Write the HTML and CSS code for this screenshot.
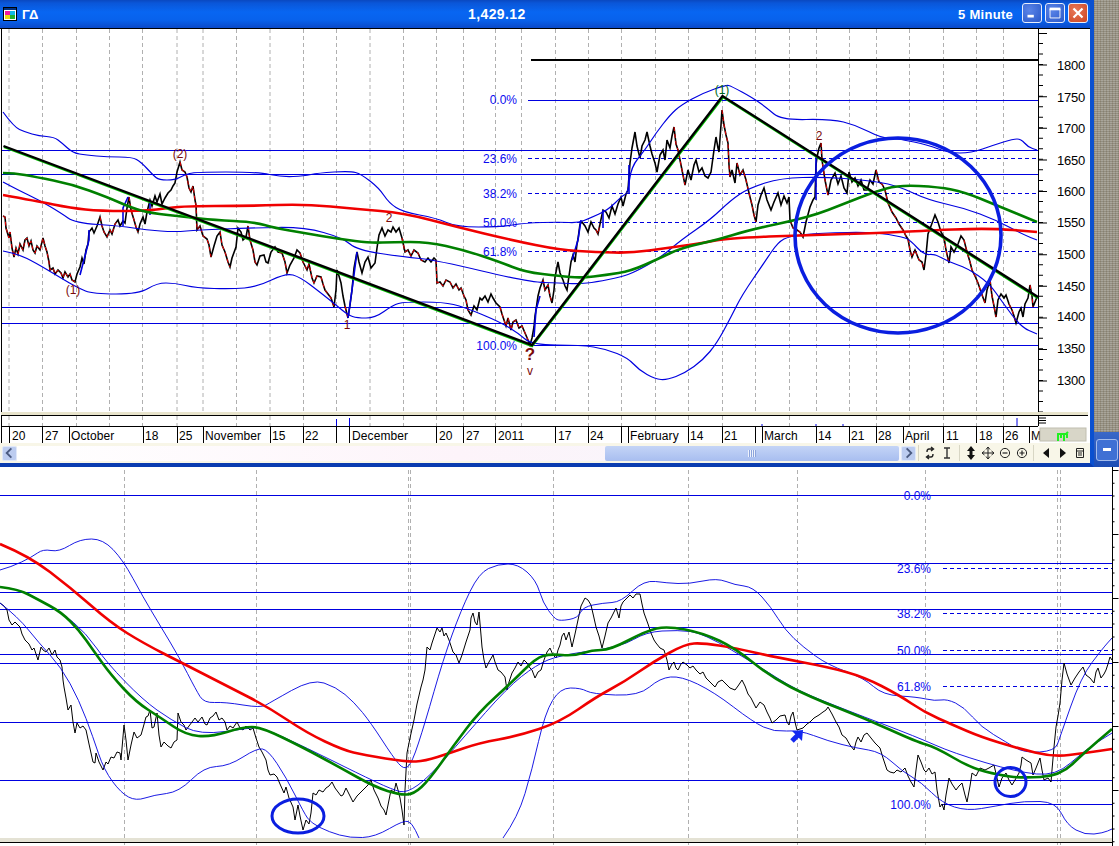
FILE: index.html
```html
<!DOCTYPE html>
<html lang="en">
<head>
	<meta charset="UTF-8">
	<title>ΓΔ 5 Minute</title>
	<link rel="stylesheet" href="styles.css">
	<script src="app.js"></script>
</head>
<body>
<div class="desktop">
	<div class="top">
		<div class="window">
			<div class="titlebar">
				<svg class="app-icon" viewBox="0 0 14 14" width="14" height="14">
					<rect x="0.5" y="0.5" width="13" height="13" fill="#fff" stroke="#000"/>
					<rect x="1" y="1" width="12" height="2" fill="#003080"/>
					<rect x="2" y="4" width="5" height="4" fill="#f018a0"/>
					<rect x="7" y="4" width="5" height="4" fill="#10b8e8"/>
					<rect x="2" y="8" width="5" height="4" fill="#e8d810"/>
					<rect x="7" y="8" width="5" height="4" fill="#20b030"/>
				</svg>
				<span class="title-name">ΓΔ</span>
				<span class="title-price">1,429.12</span>
				<span class="title-period">5 Minute</span>
				<div class="win-btns">
					<span class="win-btn"><svg viewBox="0 0 20 20" width="18" height="18"><rect x="5" y="12" width="7" height="3" fill="#fff"/></svg></span>
					<span class="win-btn"><svg viewBox="0 0 20 20" width="18" height="18"><path d="M4.5 5.5h11v10h-11z" fill="none" stroke="#fff"/><rect x="4" y="4" width="12" height="3" fill="#fff"/></svg></span>
					<span class="win-btn win-close"><svg viewBox="0 0 20 20" width="18" height="18"><path d="M5 5l10 10M15 5L5 15" stroke="#fff" stroke-width="2.4" fill="none"/></svg></span>
				</div>
			</div>

			<svg class="chart-top" viewBox="0 28 1090 415" width="1090" height="415">
				<rect class="paper" x="0" y="28" width="1090" height="415"/>
				<!-- time grid -->
				<path class="grid" d="M9 29V412M42.5 29V412M76.5 29V412M109.5 29V412M142.5 29V412M177 29V412M203 29V412M236.5 29V412M270 29V412M303.5 29V412M336.5 29V412M370 29V412M403.5 29V412M436.5 29V412M463.5 29V412M495.5 29V412M521.5 29V412M555.5 29V412M588.5 29V412M621.5 29V412M655.5 29V412M688.5 29V412M722.5 29V412M755.5 29V412M789.5 29V412M816.5 29V412M849.5 29V412M876.5 29V412M909.5 29V412M943.5 29V412M976.5 29V412M1003.5 29V412"/>
				<path class="grid" d="M9 416V426M42.5 416V426M76.5 416V426M109.5 416V426M142.5 416V426M177 416V426M236.5 416V426M270 416V426M303.5 416V426M370 416V426M403.5 416V426M436.5 416V426M463.5 416V426M495.5 416V426M521.5 416V426M588.5 416V426M621.5 416V426M655.5 416V426M688.5 416V426M722.5 416V426M789.5 416V426M876.5 416V426M909.5 416V426M943.5 416V426M976.5 416V426M1003.5 416V426"/>

				<!-- fib levels -->
				<path class="level" d="M2 150.5H1038M2 174.5H1038M2 307.5H1038M2 323.5H1038M528 100.5H1038M530 345.5H1038"/>
				<path class="level-dash" d="M528 158.5H1038M528 193.5H1038M528 222.5H1038M528 251.5H1038"/>
				<path class="heavy" d="M531 60H1038"/>

				<text class="fib" x="517" y="104" text-anchor="end">0.0%</text>
				<text class="fib" x="517" y="163" text-anchor="end">23.6%</text>
				<text class="fib" x="517" y="198" text-anchor="end">38.2%</text>
				<text class="fib" x="517" y="227" text-anchor="end">50.0%</text>
				<text class="fib" x="517" y="256" text-anchor="end">61.8%</text>
				<text class="fib" x="517" y="350" text-anchor="end">100.0%</text>

				<!-- price -->
				<polyline class="price" points="3,216 5,217 6,228 9,238 10,232 12,248 14,257 16,248 18,254 20,244 23,250 25,240 27,238 29,246 31,241 33,250 35,253 37,246 40,250 43,238 45,246 47,252 49,262 50,270 53,268 55,274 58,270 61,273 63,278 65,272 68,277 70,274 72,280 75,282 77,274 80,267 82,258 84,264 86,250 88,244 89,232 92,228 94,233 97,226 100,217 102,226 104,232 107,237 110,230 112,234 115,224 118,220 120,226 123,221 125,223 127,208 129,197 131,210 134,220 136,227 138,232 140,224 143,217 145,224 147,212 150,200 152,206 155,196 157,202 160,194 162,204 165,198 168,193 171,190 173,186 175,183 177,172 180,162 182,170 185,172 187,177 189,188 191,192 193,186 195,200 196,205 197,230 200,226 203,236 207,239 209,245 211,257 214,246 217,236 220,232 222,245 225,252 228,262 230,267 232,258 236,247 238,228 241,232 243,240 246,237 248,226 250,240 253,250 255,262 257,265 260,256 264,255 266,262 268,263 271,252 275,247 278,252 282,253 285,262 287,273 290,265 294,258 297,250 300,253 303,262 307,270 309,264 312,278 314,283 317,276 321,277 323,284 325,290 328,294 331,298 334,307 336,290 337,270 339,276 341,283 343,296 345,306 348,318 350,305 352,290 354,268 357,252 359,262 362,273 365,262 368,257 371,268 375,263 377,248 379,235 382,228 385,236 388,230 391,232 393,227 396,232 399,228 402,238 405,252 408,250 411,256 414,250 418,253 421,260 425,262 428,258 431,262 434,258 436,260 437,283 440,282 443,286 446,280 450,282 453,288 456,284 459,290 461,288 464,296 466,300 468,310 471,315 474,306 477,310 480,298 482,300 485,296 488,302 491,294 493,298 496,303 500,307 502,314 504,320 506,326 508,318 511,330 513,322 516,320 519,328 522,326 525,333 528,340 530,345 532,338 534,327 535,316 536,310 538,296 540,288 543,280 545,290 548,285 550,296 552,303 554,290 555,277 558,262 560,273 563,280 565,286 567,290 569,276 571,262 573,255 575,262 577,244 578,239 580,224 582,222 585,226 588,232 591,222 594,228 596,230 598,234 600,224 603,210 606,212 609,218 612,206 615,214 618,204 621,197 623,206 626,194 628,190 630,163 632,148 635,132 637,146 640,158 642,146 645,140 647,132 650,146 652,154 655,163 657,172 660,155 663,150 665,160 667,140 670,148 672,136 674,127 676,144 678,150 680,160 683,175 685,185 688,170 691,180 694,165 696,160 699,172 702,168 705,176 708,178 711,172 714,150 716,137 718,148 719,152 721,125 722,110 724,125 726,135 728,143 729,165 730,177 732,170 735,183 737,163 740,175 743,170 746,180 749,193 752,205 754,215 756,222 758,205 761,195 764,188 767,200 771,210 774,202 778,193 781,205 784,196 787,203 789,197 790,220 793,228 797,230 800,232 803,237 806,222 810,207 813,200 815,197 816,165 817,157 819,148 821,143 822,160 825,180 828,195 831,180 835,173 838,184 841,176 844,188 847,193 849,172 852,182 855,178 858,186 861,180 864,190 867,190 870,180 873,184 876,170 879,182 882,184 885,190 888,203 892,212 896,218 899,224 903,230 906,236 908,239 910,250 912,257 915,250 919,260 922,262 924,270 926,255 928,234 931,226 935,215 938,222 941,232 944,237 946,250 949,263 951,247 954,252 958,244 961,236 964,240 967,252 970,262 972,270 975,276 978,283 981,292 985,303 987,290 990,280 992,296 994,306 996,317 998,300 1001,294 1004,298 1006,295 1009,304 1012,310 1014,316 1016,323 1019,312 1021,308 1023,317 1025,304 1028,298 1030,285 1032,296 1033,307 1035,302 1037,297"/>
				<path class="price-down" d="M3 216L5 217L6 228L9 238L10 232L12 248L14 257L16 248L18 254L20 244L23 250L25 240L27 238L29 246L31 241L33 250L35 253L37 246L40 250L43 238L45 246L47 252L49 262L50 270L53 268L55 274L58 270L61 273L63 278L65 272L68 277L70 274L72 280L75 282M100 217L102 226L104 232L107 237L110 230L112 234L115 224L118 220M129 197L131 210L134 220L136 227L138 232M180 162L182 170L185 172L187 177L189 188L191 192L193 186L195 200L196 205L197 230L200 226L203 236L207 239L209 245L211 257M220 232L222 245L225 252L228 262L230 267M248 226L250 240L253 250L255 262L257 265M275 247L278 252L282 253L285 262L287 273M300 253L303 262L307 270L309 264L312 278L314 283L317 276L321 277L323 284L325 290L328 294L331 298L334 307M345 306L348 318M402 238L405 252L408 250L411 256L414 250L418 253L421 260L425 262M436 260L437 283L440 282L443 286L446 280L450 282L453 288L456 284L459 290L461 288L464 296L466 300L468 310L471 315M500 307L502 314L504 320L506 326L508 318L511 330L513 322L516 320L519 328L522 326L525 333L528 340L530 345M543 280L545 290L548 285L550 296L552 303M596 230L598 234L600 224M674 127L676 144L678 150L680 160L683 175L685 185M722 110L724 125L726 135L728 143L729 165L730 177M737 163L740 175L743 170L746 180L749 193L752 205L754 215L756 222M790 220L793 228L797 230L800 232L803 237M821 143L822 160L825 180L828 195M876 170L879 182L882 184L885 190L888 203L892 212L896 218L899 224L903 230L906 236L908 239L910 250L912 257L915 250L919 260L922 262L924 270M944 237L946 250L949 263M964 240L967 252L970 262L972 270L975 276L978 283L981 292L985 303M990 280L992 296L994 306L996 317M1009 304L1012 310L1014 316L1016 323M1030 285L1032 296L1033 307"/>

				<!-- bollinger bands -->
				<polyline class="band smooth" points="3,112 14,127 25,132 39,136 54,137 62,143 73,153 86,155 107,157 132,157 141,162 153,175 159,180 175,180 184,175 195,172 257,172 282,177 304,176 318,173 350,171 361,174 379,188 389,203 403,212 436,218 457,227 500,227 525,223 560,222 578,223 590,218 608,210 622,196 628,193 631,167 645,150 656,133 670,115 681,105 703,93 726,85 731,86 753,98 767,108 781,120 831,119 856,125 881,138 900,139 928,145 949,153 971,153 994,145 1013,139 1021,139 1028,147 1037,150"/>
				<polyline class="band smooth" points="3,182 18,190 39,200 61,213 75,223 121,226 146,230 175,232 198,230 250,228 304,227 343,238 357,250 404,257 436,260 528,282 560,283 578,284 596,282 621,277 635,272 660,258 681,240 710,220 731,200 749,188 781,178 824,177 864,180 896,185 928,200 964,208 996,220 1024,235 1037,240"/>
				<polyline class="band smooth" points="3,251 18,254 36,263 61,278 78,288 93,294 139,294 157,283 175,283 196,288 232,289 257,287 286,273 300,277 321,293 336,305 348,315 357,318 375,318 393,305 404,302 443,302 464,307 500,322 518,333 532,345 581,345 606,349 628,358 639,370 655,379 667,380 685,373 703,360 717,343 731,317 742,295 764,263 778,242 790,236 821,233 874,232 903,237 910,240 924,255 935,254 949,262 967,268 989,283 1003,303 1021,327 1037,334"/>
				<path class="band-spike" d="M80 275L86 252L89 240V230M123 226V208L128 197M150 215V200M348 318L352 290L357 252M534 337L536 310L540 296M572 260L578 240L581 220M603 228V210M629 193V165M816 200V157"/>

				<!-- moving averages -->
				<polyline class="ma-red smooth" points="3,195 36,201 71,208 100,211 150,211 179,206 250,206 304,204 357,209 404,213 457,227 511,240 560,250 596,252 631,253 667,248 703,243 728,238 810,235 881,233 917,231 989,228 1037,232"/>
				<polyline class="ma-green smooth" points="3,173 14,173 36,177 71,184 107,197 132,208 150,213 186,217 214,220 254,222 275,228 304,233 339,239 371,243 393,242 428,242 464,250 500,262 525,272 560,276 581,278 606,275 631,271 660,258 681,248 717,240 749,230 810,217 846,203 874,192 899,185 939,187 964,192 996,205 1037,222"/>

				<!-- trend lines -->
				<path class="trend-edge" d="M4 147L532 346L723 97L1038 298"/>
				<path class="trend" d="M3.5 146L532 345L722.5 96L1038 297"/>

				<ellipse class="ring-big" cx="898" cy="235.5" rx="103" ry="97.5"/>

				<text class="wave" x="180" y="158" text-anchor="middle">(2)</text>
				<text class="wave" x="73" y="294" text-anchor="middle">(1)</text>
				<text class="wave wave-green" x="722" y="94" text-anchor="middle">(1)</text>
				<text class="wave" x="819" y="140" text-anchor="middle">2</text>
				<text class="wave" x="389" y="222" text-anchor="middle">2</text>
				<text class="wave" x="347" y="329" text-anchor="middle">1</text>
				<text class="wave-mark" x="530" y="360" text-anchor="middle">?</text>
				<text class="wave" x="530" y="375" text-anchor="middle">v</text>

				<!-- frame -->
				<path class="frame" d="M1.5 28V443M0 28.5H1090M1038.5 29V426M1 415.5H1088M1 426.5H1038"/>
				<path class="band-beige" d="M1 413.5H1088"/>
				<line class="tick-major tick-run" x1="1043" y1="33" x2="1043" y2="412"/>
				<line class="tick-minor-run" x1="1041" y1="43" x2="1041" y2="412"/>
				<text class="axis" x="1057" y="70">1800</text>
				<text class="axis" x="1057" y="102">1750</text>
				<text class="axis" x="1057" y="133">1700</text>
				<text class="axis" x="1057" y="165">1650</text>
				<text class="axis" x="1057" y="196">1600</text>
				<text class="axis" x="1057" y="227">1550</text>
				<text class="axis" x="1057" y="259">1500</text>
				<text class="axis" x="1057" y="291">1450</text>
				<text class="axis" x="1057" y="321">1400</text>
				<text class="axis" x="1057" y="353">1350</text>
				<text class="axis" x="1057" y="385">1300</text>

				<!-- volume strip -->
				<path class="vol" d="M336.5 419V426M349.5 418V426M1017 418V426M762 424V426M816 424V426M843 424V426"/>
				<path class="frame" d="M1039 418H1046M1039 420.5H1046M1039 423H1046"/>

				<!-- dates -->
				<path class="frame" d="M9.5 427V443M42.5 427V443M69.5 427V443M143.5 427V443M177.5 427V443M203.5 427V443M270.5 427V443M303.5 427V443M336.5 427V443M349.5 427V443M436.5 427V443M463.5 427V443M495.5 427V443M555.5 427V443M588.5 427V443M621.5 427V443M628.5 427V443M688.5 427V443M722.5 427V443M755.5 427V443M762.5 427V443M816.5 427V443M849.5 427V443M876.5 427V443M903.5 427V443M943.5 427V443M976.5 427V443M1003.5 427V443M1029.5 427V443"/>
				<text class="date" x="12" y="440">20</text>
				<text class="date" x="45" y="440">27</text>
				<text class="date" x="71" y="440">October</text>
				<text class="date" x="145" y="440">18</text>
				<text class="date" x="179" y="440">25</text>
				<text class="date" x="205" y="440">November</text>
				<text class="date" x="272" y="440">15</text>
				<text class="date" x="305" y="440">22</text>
				<text class="date" x="352" y="440">December</text>
				<text class="date" x="439" y="440">20</text>
				<text class="date" x="466" y="440">27</text>
				<text class="date" x="498" y="440">2011</text>
				<text class="date" x="558" y="440">17</text>
				<text class="date" x="590" y="440">24</text>
				<text class="date" x="630" y="440">February</text>
				<text class="date" x="690" y="440">14</text>
				<text class="date" x="724" y="440">21</text>
				<text class="date" x="764" y="440">March</text>
				<text class="date" x="818" y="440">14</text>
				<text class="date" x="851" y="440">21</text>
				<text class="date" x="878" y="440">28</text>
				<text class="date" x="905" y="440">April</text>
				<text class="date" x="946" y="440">11</text>
				<text class="date" x="979" y="440">18</text>
				<text class="date" x="1005" y="440">26</text>
				<text class="date" x="1031" y="440">M</text>

				<rect class="bull-box" x="1040" y="428" width="46" height="13"/>
				<path class="bull" d="M1057 434H1066L1068 432M1058 434V441M1061 434V438M1064 434V441M1067 434V438"/>
			</svg>

			<div class="toolbar">
				<span class="scroll-btn"><svg viewBox="0 0 14 14" width="14" height="14"><path d="M9 2L4 7l5 5" fill="none" stroke="#4a5a80" stroke-width="2"/></svg></span>
				<div class="track">
					<span class="thumb"><span class="grip"></span></span>
				</div>
				<span class="scroll-btn"><svg viewBox="0 0 14 14" width="14" height="14"><path d="M5 2l5 5-5 5" fill="none" stroke="#4a5a80" stroke-width="2"/></svg></span>
				<div class="tools">
					<span class="tool-sep"></span>
					<svg class="tool" viewBox="0 0 12 14"><path d="M9 3H5Q3 3 3 6M3 11H7Q9 11 9 8M7 1L9.5 3 7 5M5 9L2.5 11 5 13" fill="none" stroke="#222" stroke-width="1.4"/></svg>
					<svg class="tool" viewBox="0 0 12 14"><path d="M3 2H9M6 2V12M3 12H9" fill="none" stroke="#333" stroke-width="1.4"/></svg>
					<span class="tool-sep"></span>
					<svg class="tool" viewBox="0 0 12 14"><path d="M6 0L10 5H2ZM6 14L2 9H10ZM4.5 5H7.5V9H4.5Z" fill="#111"/></svg>
					<svg class="tool" viewBox="0 0 12 14"><path d="M6 1V13M0 7H12M6 1L4 3.5M6 1L8 3.5M6 13L4 10.5M6 13L8 10.5M0 7L2.5 5M0 7L2.5 9M12 7L9.5 5M12 7L9.5 9" fill="none" stroke="#222"/></svg>
					<svg class="tool" viewBox="0 0 12 14"><circle cx="6" cy="7" r="4.6" fill="none" stroke="#222"/><path d="M3.5 7H8.5" stroke="#222" stroke-width="1.2"/></svg>
					<svg class="tool" viewBox="0 0 12 14"><circle cx="6" cy="7" r="4.6" fill="none" stroke="#222"/><path d="M3.5 7H8.5M6 4.5V9.5" stroke="#222" stroke-width="1.2"/></svg>
					<span class="tool-sep"></span>
					<svg class="tool" viewBox="0 0 12 14"><path d="M9 2V12L3 7Z" fill="#111"/></svg>
					<svg class="tool" viewBox="0 0 12 14"><path d="M3 2V12L9 7Z" fill="#111"/></svg>
					<svg class="tool" viewBox="0 0 12 14"><path d="M2.5 2.5H9.5V11.5H2.5ZM2.5 5H9.5M4 7H8M4 9H8" fill="none" stroke="#222"/></svg>
				</div>
			</div>
		</div>

		<div class="dock">
			<div class="dock-texture"></div>
			<div class="dock-task">
				<span class="task-btn"><span class="task-dash"></span></span>
			</div>
		</div>
	</div>

	<svg class="chart-low" viewBox="0 467 1119 379" width="1119" height="379">
		<rect class="paper" x="0" y="467" width="1119" height="379"/>
		<path class="grid" d="M124.5 470V846M256.5 470V846M408.5 470V846M410.5 470V846M553.5 470V846M688.5 470V846M797.5 470V846M925.5 470V846M1057.5 470V846M1060.5 470V846"/>
		<path class="level" d="M0 495.5H1112M0 563.5H1112M0 592.5H1112M0 609.5H1112M0 627.5H1112M0 654.5H1112M0 663.5H1112M0 722.5H1112M0 780.5H1112M942 804.5H1112"/>
		<path class="level-dash" d="M943 568.5H1112M943 613.5H1112M943 650.5H1112M943 686.5H1112"/>

		<text class="fib" x="931" y="500" text-anchor="end">0.0%</text>
		<text class="fib" x="931" y="573" text-anchor="end">23.6%</text>
		<text class="fib" x="931" y="618" text-anchor="end">38.2%</text>
		<text class="fib" x="931" y="655" text-anchor="end">50.0%</text>
		<text class="fib" x="931" y="691" text-anchor="end">61.8%</text>
		<text class="fib" x="931" y="809" text-anchor="end">100.0%</text>

		<polyline class="price-thin" points="0,603 4,606 7,610 9,620 12,625 15,622 20,627 22,634 25,640 29,644 32,650 34,648 36,654 38,660 41,647 43,650 46,652 49,648 52,655 55,650 57,657 60,660 62,667 63,680 64,687 66,698 68,710 71,705 73,722 75,733 77,723 80,728 83,726 86,730 89,744 91,753 93,762 95,763 96,753 99,762 103,770 106,762 108,764 111,757 114,758 117,752 120,753 121,760 124,725 126,740 128,760 131,745 134,732 137,738 141,735 143,728 146,717 148,716 150,710 152,728 154,727 157,713 159,735 161,747 164,742 168,746 171,748 174,742 177,740 178,713 181,722 184,725 186,730 189,726 192,722 195,718 198,722 202,717 205,724 207,725 210,718 213,716 216,712 219,720 222,718 225,722 227,730 230,726 233,728 237,722 240,728 243,730 246,726 250,730 253,728 256,738 259,747 262,752 266,760 268,770 270,775 274,774 277,777 280,784 284,793 286,787 289,798 293,807 295,820 298,805 300,816 303,830 306,820 309,824 311,813 313,793 316,795 319,790 323,792 326,788 329,786 332,782 335,788 338,792 341,796 343,795 346,788 349,794 353,802 357,796 361,792 365,788 368,785 371,780 374,790 378,798 381,806 384,810 386,815 389,800 391,790 394,792 396,783 398,790 400,798 402,810 404,825 405,790 407,753 410,738 414,720 417,704 421,687 423,680 425,670 427,647 430,650 432,643 435,634 437,628 440,632 442,628 444,636 446,633 449,640 450,643 453,652 456,655 459,663 462,655 466,642 470,630 471,618 473,613 475,622 477,625 479,612 481,635 482,647 484,660 486,668 489,662 493,655 495,662 498,670 501,672 505,677 507,690 509,682 512,673 515,668 518,662 521,666 524,660 527,663 530,668 532,670 535,678 538,672 541,670 544,660 547,652 550,648 553,655 556,658 558,650 560,645 562,636 564,633 566,640 569,632 571,642 572,647 575,634 578,620 581,606 585,598 588,600 591,605 594,618 596,627 599,636 602,648 605,636 608,623 611,618 614,612 616,608 619,618 621,606 623,602 627,598 630,595 633,598 636,594 640,594 642,604 644,613 648,624 651,633 654,640 656,643 660,648 664,650 667,660 669,670 672,664 674,662 676,668 678,670 681,664 683,662 687,665 690,668 693,666 696,670 700,674 703,672 706,678 708,680 712,684 715,687 718,682 722,680 726,684 730,688 735,690 738,686 742,680 745,686 748,694 751,698 754,704 756,708 760,702 764,705 767,712 770,718 772,723 776,720 780,716 785,715 787,722 789,725 791,716 793,712 795,722 797,730 800,729 803,728 807,724 810,722 814,718 819,715 823,712 826,710 828,707 832,714 836,722 839,727 842,735 846,738 850,745 854,750 856,742 858,737 861,742 864,735 867,733 871,738 875,743 880,748 883,758 887,770 890,772 894,773 897,770 901,772 905,768 908,776 911,782 914,787 916,770 918,755 921,762 924,770 926,772 929,768 932,774 935,772 937,790 940,807 942,804 944,810 946,795 949,778 952,784 956,790 959,786 962,783 965,795 967,802 970,786 972,773 976,776 980,768 985,770 989,768 994,765 997,778 999,787 1002,778 1006,773 1009,780 1012,785 1015,780 1019,773 1021,765 1022,757 1026,760 1031,763 1033,775 1036,768 1040,758 1042,770 1044,780 1048,778 1051,782 1052,770 1054,747 1056,727 1058,716 1060,703 1062,680 1064,663 1067,674 1071,685 1075,678 1079,672 1083,667 1086,675 1090,678 1094,683 1096,672 1098,668 1101,678 1104,674 1106,670 1108,664 1110,657 1112,660"/>

		<polyline class="band-thin smooth" points="0,570 11,567 32,557 43,549 59,552 80,539 103,539 123,560 143,597 161,627 179,657 196,690 204,703 225,702 261,708 271,702 312,679 336,687 354,702 371,723 393,757 404,770 412,763 425,723 443,660 461,610 479,573 498,564 518,564 536,580 543,603 554,618 560,621 578,618 583,607 603,603 621,602 644,580 667,583 689,584 717,578 735,585 753,587 771,607 785,630 803,647 828,665 864,678 883,695 917,697 935,701 947,699 964,707 981,727 1006,742 1024,753 1055,751 1060,737 1081,677 1103,648 1112,638"/>
		<polyline class="band-thin smooth" points="0,587 18,589 36,598 61,612 86,633 107,663 143,700 171,720 200,735 250,728 261,727 307,748 357,773 393,790 407,793 429,777 464,737 507,688 536,665 560,655 621,647 646,632 678,630 703,633 760,667 796,690 846,710 917,737 953,753 1017,772 1056,776 1085,750 1112,733"/>
		<polyline class="band-thin smooth" points="0,603 18,617 39,643 61,667 79,700 93,737 104,770 121,793 136,801 154,795 179,792 204,767 229,766 257,748 268,750 286,777 304,813 311,823 329,832 350,838 375,837 404,820 412,823 419,838"/>
		<polyline class="band-thin smooth" points="503,838 518,817 532,770 545,713 560,688 581,688 592,694 639,696 660,678 681,676 714,692 753,722 774,732 799,730 828,741 856,748 881,752 903,772 921,782 942,803 967,811 996,806 1024,801 1056,802 1067,825 1085,835 1103,833 1112,829"/>

		<polyline class="ma-red smooth" points="0,544 29,556 71,588 111,623 143,643 186,665 229,687 268,707 307,733 343,750 364,755 407,762 425,761 450,753 479,743 518,736 560,722 596,697 624,682 653,662 685,644 703,643 735,648 774,657 828,667 864,677 899,695 924,712 953,725 981,737 1017,748 1053,757 1085,753 1112,749"/>
		<polyline class="ma-green smooth" points="0,587 18,589 39,600 61,612 79,630 93,650 111,675 136,702 161,718 186,735 211,737 243,727 261,727 304,748 339,767 375,787 400,795 414,794 429,780 454,745 479,712 511,683 536,658 550,654 574,656 592,650 610,650 646,631 667,626 703,633 735,648 771,677 810,697 864,718 917,742 935,747 971,768 999,775 1021,778 1060,776 1085,752 1112,729"/>

		<ellipse class="ring" cx="298" cy="816" rx="26" ry="17"/>
		<ellipse class="ring" cx="1010.5" cy="782" rx="15.5" ry="14.5"/>
		<path class="arrow" d="M792 741L799 734"/>
		<path class="arrow-head" d="M803 730L802 741L792 731Z"/>

		<rect class="foot-band" x="0" y="838" width="1112" height="4"/>
		<path class="frame" d="M0 842.5H1112M1112.5 467V846"/>
		<line class="tick-major tick-low-major" x1="1115.5" y1="470" x2="1115.5" y2="846"/>
		<line class="tick-major tick-low-minor" x1="1113.5" y1="470" x2="1113.5" y2="846"/>
	</svg>
</div>
</body>
</html>
```

FILE: styles.css
```css
*{margin:0;padding:0;box-sizing:border-box}
body{
	background:#fff;
	font-family:"Liberation Sans", Arial, sans-serif;
}
.desktop{
	width:1119px;
	height:846px;
	overflow:hidden;
	display:flex;
	flex-direction:column;
}
.top{
	display:flex;
	height:467px;
}
.window{
	width:1094px;
	height:467px;
	background:#f4f2e4;
	border-right:4px solid #0a50d0;
	border-bottom:4px solid #0a3cb0;
	display:flex;
	flex-direction:column;
}
.titlebar{
	height:28px;
	flex:none;
	display:flex;
	align-items:center;
	color:#fff;
	font-weight:bold;
	font-size:13px;
	letter-spacing:.6px;
	background:linear-gradient(#0a48c0 0,#0a56d8 3px,#0866f2 12px,#0862ec 20px,#0a4ccc 27px);
	padding-left:3px;
	position:relative;
}
.app-icon{flex:none}
.title-name{margin-left:5px;width:446px}
.title-price{width:490px;font-size:14px;letter-spacing:.4px}
.title-period{width:64px;font-size:13px;letter-spacing:.3px}
.win-btns{
	display:flex;
	gap:3px;
	margin-top:-3px;
}
.win-btn{
	width:20px;
	height:20px;
	border:1px solid #e8eefc;
	border-radius:3px;
	background:radial-gradient(circle at 35% 35%,#5a84e8,#2a58c8);
	display:flex;
	align-items:center;
	justify-content:center;
}
.win-close{background:radial-gradient(circle at 35% 35%,#e87858,#cc4420)}

.chart-top,.chart-low{display:block;flex:none}
.paper{fill:#fff}
.band-beige{stroke:#e8e4cc;stroke-width:3;fill:none}
.grid{stroke:#b0b0b0;stroke-width:1;stroke-dasharray:4 3;fill:none}
.level{stroke:#0000e0;stroke-width:1;fill:none}
.level-dash{stroke:#0000e0;stroke-width:1;stroke-dasharray:4 3;fill:none}
.heavy{stroke:#000;stroke-width:2;fill:none}
.fib{fill:#0a0af0;font-size:12px}
.price{fill:none;stroke:#000;stroke-width:1.6}
.price-down{fill:none;stroke:#f00000;stroke-width:1;stroke-dasharray:4 3}
.price-thin{fill:none;stroke:#000;stroke-width:1}
.band{fill:none;stroke:#0000e0;stroke-width:1.2}
.band-spike{fill:none;stroke:#0000e0;stroke-width:1.6}
.band-thin{fill:none;stroke:#0000e0;stroke-width:.9}
.ma-red{fill:none;stroke:#f00000;stroke-width:2.6}
.ma-green{fill:none;stroke:#008000;stroke-width:2.6}
.trend{fill:none;stroke:#000;stroke-width:2.4}
.trend-edge{fill:none;stroke:#00c000;stroke-width:2.4}
.ring-big{fill:none;stroke:#0a1ee0;stroke-width:3.6}
.ring{fill:none;stroke:#0a1ee0;stroke-width:3}
.arrow{stroke:#1428f0;stroke-width:5;fill:none}
.arrow-head{fill:#1428f0}
.wave{fill:#7a0a0a;font-size:12px}
.wave-green{fill:#006a20}
.wave-mark{fill:#7a0a0a;font-size:17px;font-weight:bold}
.frame{stroke:#000;stroke-width:1;fill:none}
.axis{fill:#000;font-size:13px;letter-spacing:-.2px}
.date{fill:#000;font-size:12px;letter-spacing:.1px}
.vol{stroke:#0000e0;stroke-width:1;fill:none}
.tick-major{stroke:#000;fill:none}
.tick-run{stroke-width:8;stroke-dasharray:1 30.6}
.tick-minor-run{stroke:#000;stroke-width:4;stroke-dasharray:1 9.53}
.foot-band{fill:#e4e2d4}
.tick-low-major{stroke-width:6;stroke-dasharray:1 63}
.tick-low-minor{stroke-width:2;stroke-dasharray:1 11.8}
.bull-box{fill:#d8d6c8;stroke:#c0beb0}
.bull{fill:none;stroke:#20f020;stroke-width:2}

.toolbar{
	height:20px;
	flex:none;
	display:flex;
	align-items:center;
	padding-left:2px;
	padding-right:2px;
	background:#f8f6e8;
}
.scroll-btn{
	width:15px;
	height:15px;
	flex:none;
	background:#bcccf0;
	border:1px solid #e0e8fa;
	border-radius:2px;
	display:flex;
	align-items:center;
	justify-content:center;
}
.track{
	width:884px;
	height:15px;
	flex:none;
	background:linear-gradient(90deg,#fff 0,#fdf4fa 50%,#f4f6fc 100%);
	display:flex;
	justify-content:flex-end;
	padding-right:2px;
}
.thumb{
	width:294px;
	height:15px;
	background:linear-gradient(#c4d4f6,#a8bef0);
	border-radius:2px;
	display:flex;
	align-items:center;
	justify-content:center;
}
.grip{
	width:8px;
	height:7px;
	background:repeating-linear-gradient(90deg,#eef2fc 0 1px,#8ca4dc 1px 2px);
}
.tools{
	flex:1;
	display:flex;
	align-items:center;
	justify-content:space-between;
	padding-left:2px;
	padding-right:2px;
}
.tool{width:12px;height:14px;flex:none}
.tool-sep{width:1px;height:16px;background:#d8d6c4}

.dock{
	flex:1;
	display:flex;
	flex-direction:column;
	height:467px;
}
.dock-texture{
	flex:1;
	background:
		repeating-linear-gradient(90deg,rgba(120,100,70,.18) 0 1px,rgba(255,255,255,.08) 1px 3px),
		repeating-linear-gradient(0deg,#8a8678 0 1px,#a29e92 1px 2px);
}
.dock-task{
	height:35px;
	flex:none;
	background:linear-gradient(#3a68c8,#1c4cb4);
	display:flex;
	align-items:center;
	padding-left:2px;
}
.task-btn{
	width:22px;
	height:22px;
	border:1px solid #a4bcec;
	border-radius:3px;
	background:#3f70d4;
	display:flex;
	align-items:center;
	justify-content:center;
}
.task-dash{width:8px;height:3px;background:#fff}
```

FILE: app.js
```js
// turn the hand-picked curve points into smooth paths
window.onload = function(){
	var lines = document.querySelectorAll('polyline.smooth');
	for(var i=0; i<lines.length; i++){
		var pts = lines[i].getAttribute('points').trim().split(/\s+/).map(function(p){
			return p.split(',').map(Number);
		});
		var d = 'M' + pts[0].join(' ');
		for(var j=1; j<pts.length-1; j++){
			var midX = (pts[j][0] + pts[j+1][0]) / 2;
			var midY = (pts[j][1] + pts[j+1][1]) / 2;
			d += 'Q' + pts[j].join(' ') + ' ' + midX + ' ' + midY;
		}
		d += 'L' + pts[pts.length-1].join(' ');
		var path = document.createElementNS('http://www.w3.org/2000/svg', 'path');
		path.setAttribute('class', lines[i].getAttribute('class'));
		path.setAttribute('d', d);
		lines[i].parentNode.replaceChild(path, lines[i]);
	}
};
```
